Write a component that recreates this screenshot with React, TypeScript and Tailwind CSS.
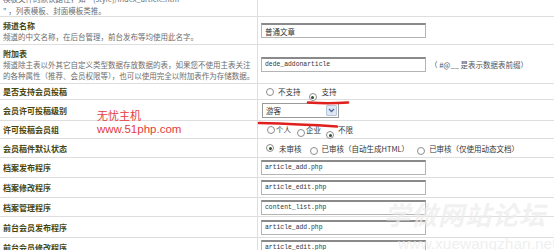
import React from "react";

const lbl = "text-[8px] font-bold text-[#454510] leading-[11px] whitespace-nowrap";
const desc = "text-[7.5px] text-[#6e6e6e] leading-[11px] whitespace-nowrap";
const val = "text-[7.5px] text-[#333] leading-[11px] whitespace-nowrap";

function Row({ h, left, right, leftJustify }: { h: string; left: React.ReactNode; right?: React.ReactNode; leftJustify?: string }) {
  return (
    <div className={`flex ${h} border-b border-[#dedede]`}>
      <div className={`w-[258px] shrink-0 border-r border-[#dedede] pl-[3px] flex flex-col ${leftJustify ?? "justify-center"}`}>{left}</div>
      <div className="flex-1 pl-[3px] flex items-center">{right}</div>
    </div>
  );
}

function Input({ text, mono = true }: { text: string; mono?: boolean }) {
  return (
    <div className="w-[165px] h-[15px] border border-[#b4b4b4] border-t-[#8a8a8a] border-t-2 bg-white flex items-center pl-[3px]">
      <span className={mono ? "font-['Liberation_Mono',monospace] text-[6.4px] text-[#333] whitespace-nowrap" : val}>{text}</span>
    </div>
  );
}

function Radio({ on }: { on?: boolean }) {
  return (
    <span className="inline-flex w-[8px] h-[8px] rounded-full border border-[#8d8d8d] bg-white items-center justify-center shrink-0">
      {on && <span className="w-[3px] h-[3px] rounded-full bg-[#2f4f2f]" />}
    </span>
  );
}

export default function App() {
  return (
    <div className="relative w-[554px] h-[250px] overflow-hidden bg-white font-['Noto_Sans_CJK_SC',sans-serif]">
      <Row
        h="h-[17px]"
        leftJustify="justify-end pb-[0px]"
        left={
          <>
            <div className={`${desc} leading-[13px]`}>模板文件的默认路径，如“{"{style}"}/index_article.htm</div>
            <div className={desc}>" ，列表模板、封面模板类推。</div>
          </>
        }
      />
      <Row
        h="h-[28px]"
        left={
          <>
            <div className={lbl}>频道名称</div>
            <div className={desc}>频道的中文名称，在后台管理，前台发布等均使用此名字。</div>
          </>
        }
        right={<Input text="普通文章" mono={false} />}
      />
      <Row
        h="h-[39px]"
        left={
          <>
            <div className={lbl}>附加表</div>
            <div className={desc}>频道除主表以外其它自定义类型数据存放数据的表，如果您不使用主表关注</div>
            <div className={desc}>的各种属性（推荐、会员权限等），也可以使用完全以附加表作为存储数据。</div>
          </>
        }
        right={
          <>
            <Input text="dede_addonarticle" />
            <span className={`${val} ml-[4px] text-[#555]`}>（ #@__ 是表示数据表前缀）</span>
          </>
        }
      />
      <Row
        h="h-[16px]"
        left={<div className={lbl}>是否支持会员投稿</div>}
        right={
          <div className="flex items-center ml-[5px]">
            <Radio />
            <span className={`${val} ml-[4px]`}>不支持</span>
            <span className="ml-[8px]"><Radio on /></span>
            <span className={`${val} ml-[5px]`}>支持</span>
          </div>
        }
      />
      <Row
        h="h-[21px]"
        left={<div className={lbl}>会员许可投稿级别</div>}
        right={
          <div className="ml-[1px] w-[77px] h-[15px] border border-[#9a9a9a] bg-white flex items-center justify-between">
            <span className={`${val} ml-[3px]`}>游客</span>
            <span className="w-[11px] h-[11px] mr-[1px] bg-[#dfe7f3] border border-[#b8c6dc] rounded-[1px] flex items-center justify-center">
              <svg width="7" height="5" viewBox="0 0 7 5"><path d="M1 1 L3.5 3.5 L6 1" stroke="#4a6a9a" strokeWidth="1.3" fill="none" /></svg>
            </span>
          </div>
        }
      />
      <Row
        h="h-[18px]"
        left={<div className={lbl}>许可投稿会员组</div>}
        right={
          <div className="flex items-center ml-[6px]">
            <Radio />
            <span className={`${val} ml-[1px]`}>个人</span>
            <span className="ml-[6px]"><Radio /></span>
            <span className={`${val} ml-[1px]`}>企业</span>
            <span className="ml-[5px]"><Radio on /></span>
            <span className={`${val} ml-[4px]`}>不限</span>
          </div>
        }
      />
      <Row
        h="h-[19px]"
        left={<div className={lbl}>会员稿件默认状态</div>}
        right={
          <div className="flex items-center ml-[5px]">
            <Radio on />
            <span className={`${val} ml-[5px]`}>未审核</span>
            <span className="ml-[8px]"><Radio /></span>
            <span className={`${val} ml-[4px]`}>已审核（自动生成HTML）</span>
            <span className="ml-[8px]"><Radio /></span>
            <span className={`${val} ml-[4px]`}>已审核（仅使用动态文档）</span>
          </div>
        }
      />
      <Row h="h-[20px]" left={<div className={lbl}>档案发布程序</div>} right={<Input text="article_add.php" />} />
      <Row h="h-[20px]" left={<div className={lbl}>档案修改程序</div>} right={<Input text="article_edit.php" />} />
      <Row h="h-[19px]" left={<div className={lbl}>档案管理程序</div>} right={<Input text="content_list.php" />} />
      <Row h="h-[21px]" left={<div className={lbl}>前台会员发布程序</div>} right={<Input text="article_add.php" />} />
      <Row h="h-[20px]" left={<div className={lbl}>前台会员修改程序</div>} right={<Input text="article_edit.php" />} />

      {/* annotations */}
      <div className="absolute left-[97px] top-[109px] text-[11px] leading-[13px] text-[#e53b3b] font-['Noto_Sans_CJK_SC',sans-serif]">无忧主机</div>
      <div className="absolute left-[97px] top-[123px] text-[11.5px] leading-[13px] text-[#e53b3b] font-['Liberation_Sans',sans-serif]">www.51php.com</div>
      <svg className="absolute left-0 top-0 pointer-events-none" width="554" height="250">
        <path d="M308 102.5 Q 328 104 348 102.5" stroke="#e0201c" strokeWidth="2.6" strokeLinecap="round" fill="none" />
        <path d="M259 123 Q 300 124 337 126.5" stroke="#e0201c" strokeWidth="2.6" strokeLinecap="round" fill="none" />
      </svg>
      <div className="absolute left-[384px] top-[199px] text-[26px] leading-[30px] font-bold italic text-[#ececec]/70 tracking-[1px] font-['Noto_Sans_CJK_SC',sans-serif]">学做网站论坛</div>
      <div className="absolute left-[398px] top-[235px] text-[15.5px] leading-[18px] text-[#e8e8e8]/70 font-['Liberation_Sans',sans-serif]">www.xuewangzhan.net</div>
    </div>
  );
}
